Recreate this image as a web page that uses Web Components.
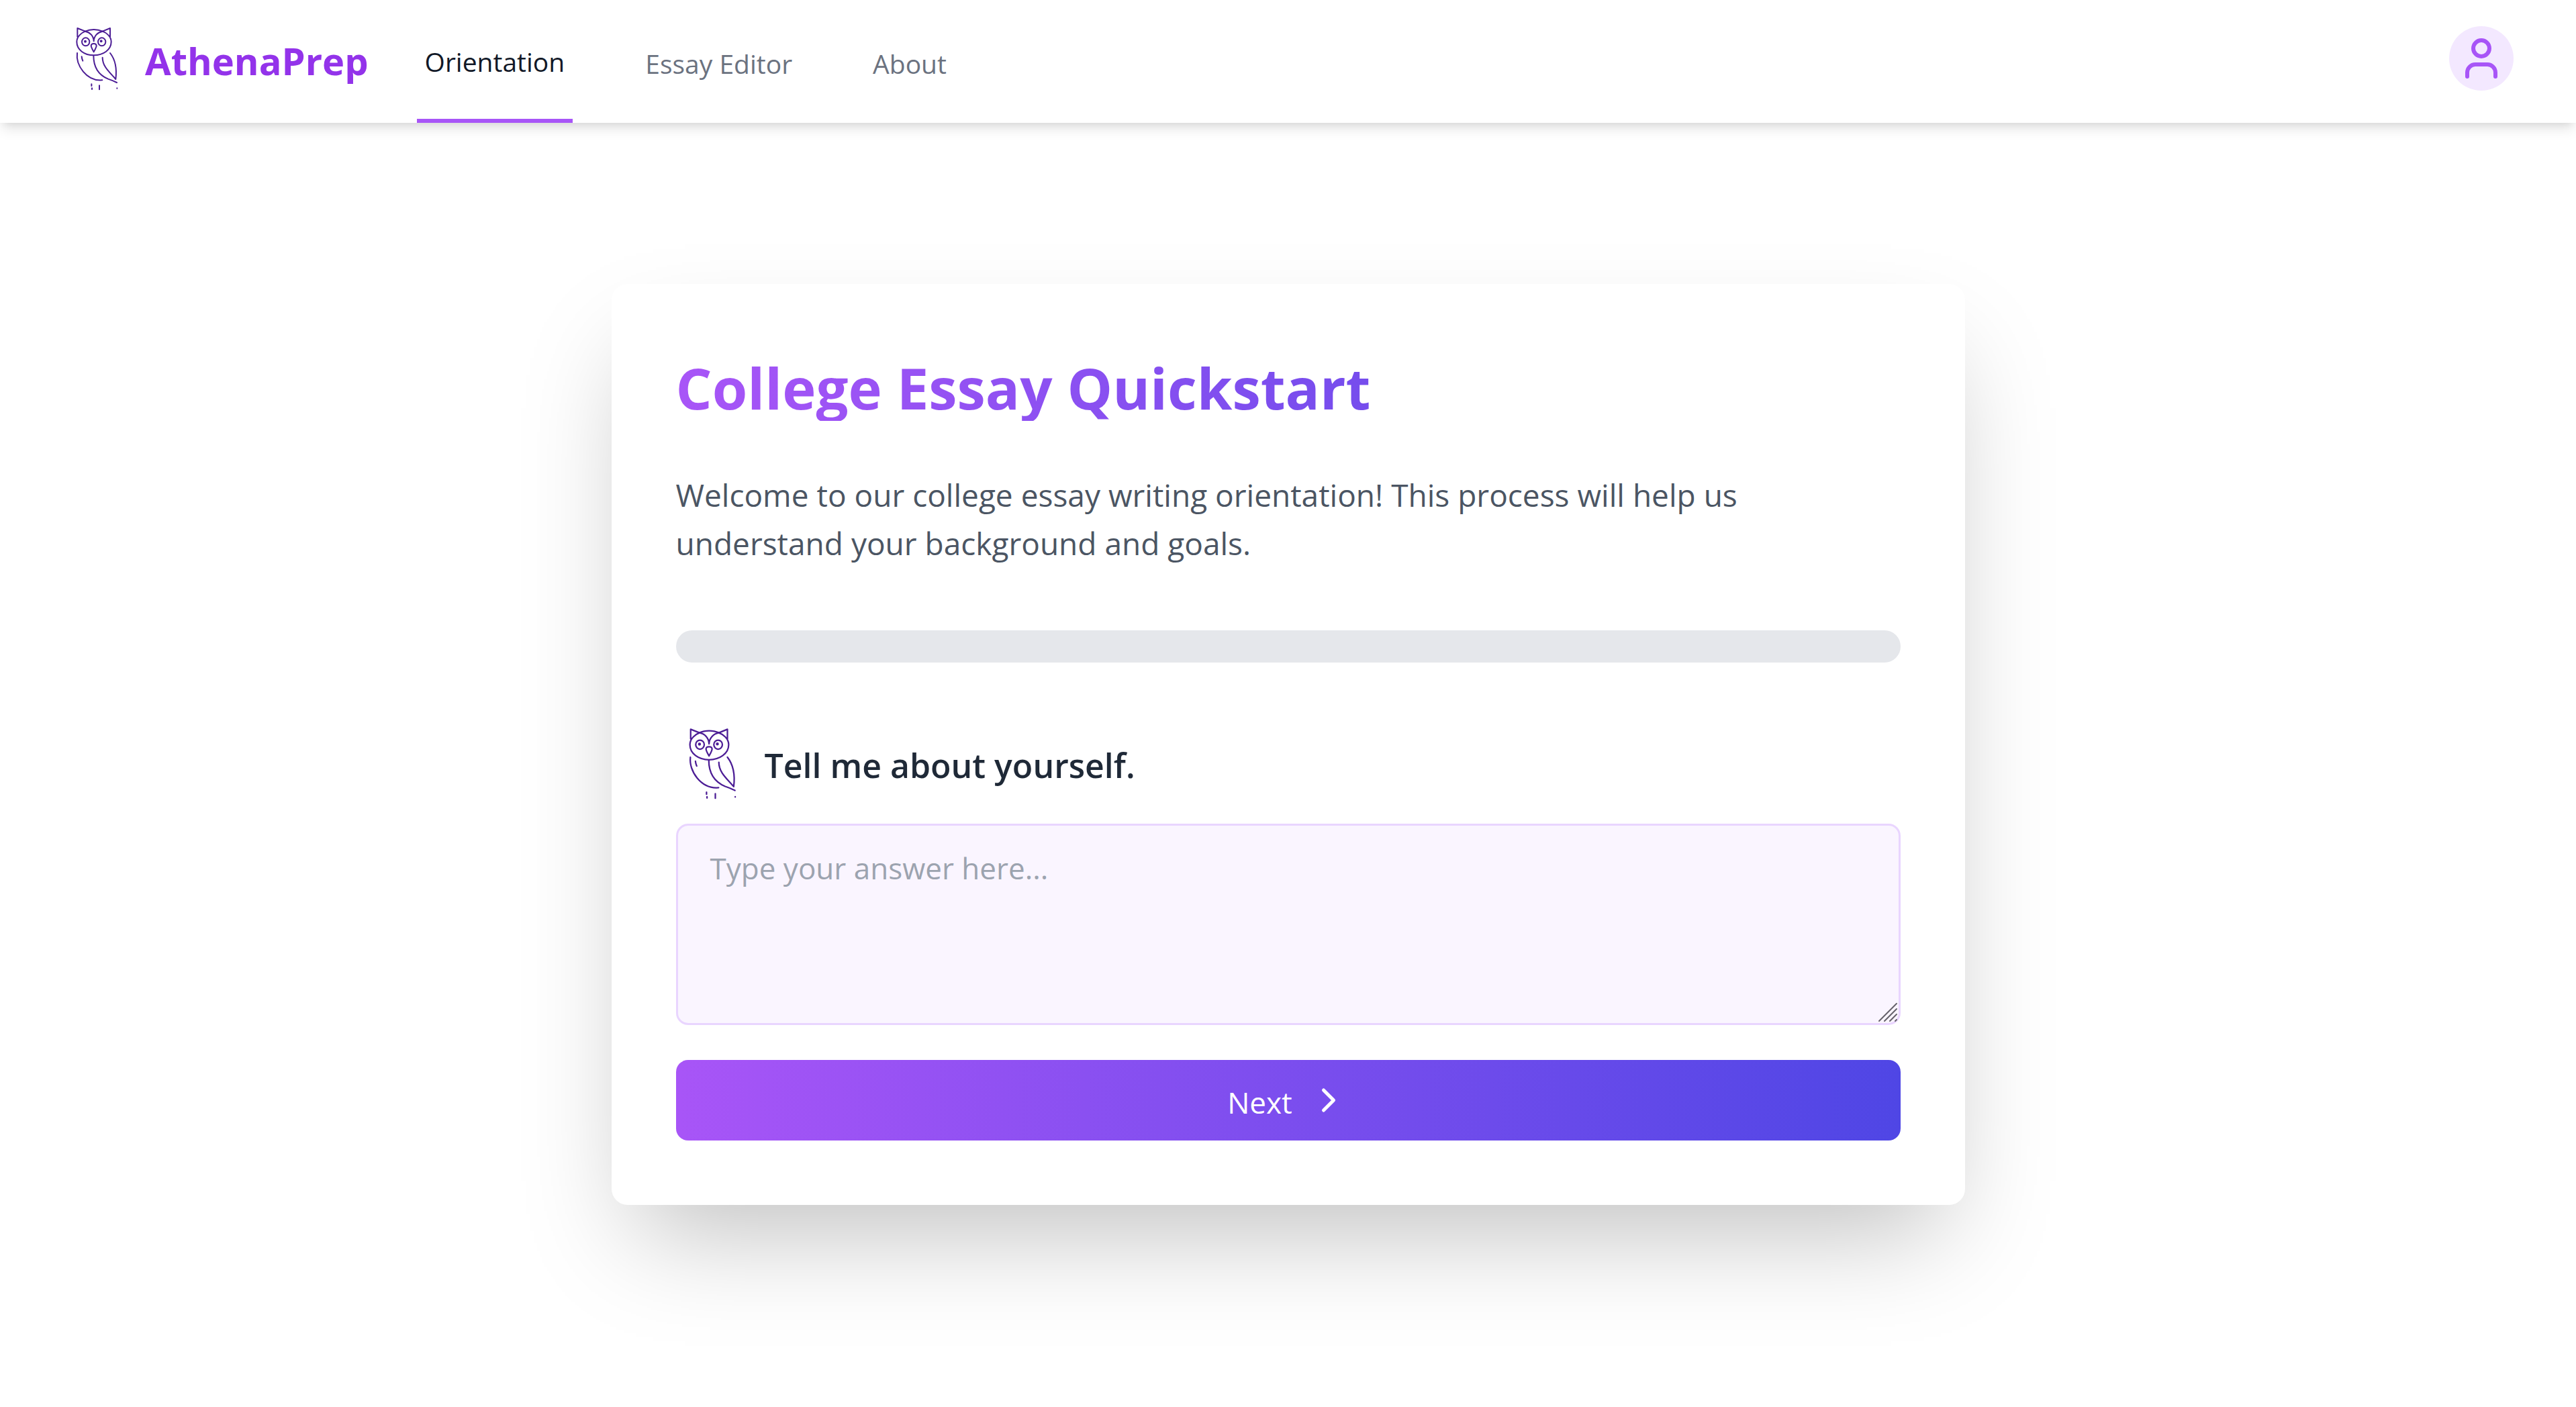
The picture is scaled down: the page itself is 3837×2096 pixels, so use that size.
<!DOCTYPE html>
<html lang="en">
<head>
<meta charset="utf-8">
<title>AthenaPrep</title>
<style>
  body { margin: 0; min-height: 100vh; background: #fff; font-family: "Open Sans", "Noto Sans", sans-serif; font-size: 46px; line-height: 72px; }
</style>
</head>
<body>
<app-header>
  <nav-link href="#orientation" active>Orientation</nav-link>
  <nav-link href="#editor">Essay Editor</nav-link>
  <nav-link href="#about">About</nav-link>
</app-header>
<quickstart-card>
  <span slot="title">College Essay Quickstart</span>
  <span slot="intro">Welcome to our college essay writing orientation! This process will help us understand your background and goals.</span>
  <progress-track value="0"></progress-track>
  <question-form question="Tell me about yourself." placeholder="Type your answer here..."></question-form>
</quickstart-card>

<script>
  class Base extends HTMLElement {
    constructor() {
      super();
      this.attachShadow({ mode: "open" });
    }
    connectedCallback() { this.shadowRoot.innerHTML = this.render(); }
  }

  customElements.define("owl-logo", class extends Base {
    render() {
      return `<style>
        :host { display: block; flex: none; width: 96px; height: 96px; }
        svg { display: block; width: 100%; height: 100%; }
      </style>
      <svg viewBox="48 57 288 288" fill="none" stroke="#4c1d95" stroke-width="6" stroke-linecap="round" stroke-linejoin="round" aria-hidden="true">
        <path d="M106 104V66L141 80C128 85 103 101 103 127C103 162 136 187 179 187S257 162 257 127C257 101 232 85 218 80L252 66V104"/>
        <path d="M141 80C163 69 195 69 218 80"/>
        <path d="M141 80C163 84 178 101 179 124C180 101 196 84 218 80"/>
        <ellipse cx="143" cy="127" rx="17" ry="18"/>
        <ellipse cx="215" cy="127" rx="17" ry="18"/>
        <circle cx="141" cy="125" r="3" fill="#4c1d95"/>
        <circle cx="212" cy="124" r="3" fill="#4c1d95"/>
        <path d="M179 172C173 161 167 151 167 144C168 132 190 132 191 144C191 151 185 161 179 172Z"/>
        <path d="M105 177C98 230 146 304 217 298"/>
        <path d="M125 193Q126 203 130 212"/>
        <path d="M178 189C178 235 198 274 243 293Q264 300 282 309"/>
        <path d="M252 177C274 205 283 246 277 294C250 262 218 238 218 197"/>
        <path d="M169 316V324M171 334V339M204 322V340M283 334V335"/>
      </svg>`;
    }
  });

  customElements.define("nav-link", class extends Base {
    render() {
      return `<style>
        :host { display: flex; }
        a { display: flex; align-items: center; padding: 6px 12px 0; font-size: 39px; line-height: 60px; color: #6b7280; text-decoration: none; }
        :host([active]) a { color: #111827; border-bottom: 6px solid #a855f7; }
      </style>
      <a href="${this.getAttribute("href")}"><slot></slot></a>`;
    }
  });

  customElements.define("app-header", class extends Base {
    render() {
      return `<style>
        :host { display: block; }
        header { display: flex; align-items: stretch; height: 183px; padding: 0 93px 0 96px; box-sizing: border-box;
          box-shadow: 0 12px 18px -3px rgba(0,0,0,.1), 0 6px 12px -6px rgba(0,0,0,.1); }
        .brand { display: flex; align-items: center; gap: 24px; padding-bottom: 9px; margin-right: 72px; font-size: 56px; line-height: 84px; font-weight: 700; color: #9333ea; text-decoration: none; }
        .brand span { padding-top: 6px; }
        nav { display: flex; gap: 96px; flex: 1; }
        .side { display: flex; align-items: center; padding-bottom: 9px; }
        button { display: flex; align-items: center; justify-content: center; width: 96px; height: 96px; padding: 0; border: 0; border-radius: 50%; background: #f3e8ff; color: #a855f7; }
        svg { width: 72px; height: 72px; }
      </style>
      <header>
        <a class="brand" href="#home"><owl-logo></owl-logo><span>AthenaPrep</span></a>
        <nav><slot></slot></nav>
        <div class="side">
          <button type="button" aria-label="Account">
            <svg viewBox="0 0 24 24" fill="none" stroke="currentColor" stroke-width="2" stroke-linecap="round" stroke-linejoin="round"><path d="M19 21v-2a4 4 0 0 0-4-4H9a4 4 0 0 0-4 4v2"/><circle cx="12" cy="7" r="4"/></svg>
          </button>
        </div>
      </header>`;
    }
  });

  customElements.define("progress-track", class extends Base {
    render() {
      return `<style>
        :host { display: block; height: 48px; border-radius: 24px; overflow: hidden; background: #e5e7eb; }
        div { height: 100%; background: #a855f7; }
      </style>
      <div role="progressbar" aria-label="Progress" style="width:${this.getAttribute("value")}%"></div>`;
    }
  });

  customElements.define("question-form", class extends Base {
    render() {
      return `<style>
        :host { display: block; font-size: 44px; }
        form { display: flex; flex-direction: column; margin: 0; }
        .question { display: flex; align-items: center; gap: 24px; margin-bottom: 36px; }
        owl-logo { width: 108px; height: 108px; }
        label { padding-top: 6px; font-size: 50px; line-height: 84px; font-weight: 600; color: #1f2937; }
        .field { display: grid; margin-bottom: 52px; }
        .field > * { grid-area: 1 / 1; }
        textarea { display: block; width: 100%; height: 300px; box-sizing: border-box; margin: 0; padding: 27px 48px; border: 3px solid #e9d5ff; border-radius: 18px; background: #faf5ff; color: #1f2937; font: inherit; resize: none; outline: 0; }
        textarea::placeholder { color: #9ca3af; opacity: 1; }
        .grip { place-self: end; width: 36px; height: 36px; pointer-events: none; }
        button { display: flex; align-items: center; justify-content: center; gap: 24px; height: 120px; padding: 0 48px; border: 0; border-radius: 18px; background: linear-gradient(to right, #a855f7, #4f46e5); color: #fff; font: inherit; }
        button span { padding-top: 6px; }
        .chevron { width: 60px; height: 60px; }
      </style>
      <form>
        <div class="question"><owl-logo></owl-logo><label for="answer">${this.getAttribute("question")}</label></div>
        <div class="field">
          <textarea id="answer" placeholder="${this.getAttribute("placeholder")}"></textarea>
          <svg class="grip" viewBox="0 0 36 36" stroke="#66626b" stroke-width="2" stroke-linecap="round" aria-hidden="true"><path d="M4 30 30 4M12 30 30 12M20 30 30 20M28 30 30 28"/></svg>
        </div>
        <button type="button"><span>Next</span><svg class="chevron" viewBox="0 0 24 24" fill="none" stroke="currentColor" stroke-width="2" stroke-linecap="round" stroke-linejoin="round" aria-hidden="true"><path d="m9 18 6-6-6-6"/></svg></button>
      </form>`;
    }
  });

  customElements.define("quickstart-card", class extends Base {
    render() {
      return `<style>
        :host { display: block; padding: 240px 48px; }
        main { display: flex; flex-direction: column; max-width: 2016px; margin: 0 auto; padding: 96px; box-sizing: border-box; border-radius: 24px; background: #fff; box-shadow: 0 75px 150px -36px rgba(0,0,0,.25); }
        h1 { margin: 0 0 74px; padding-top: 8px; font-size: 85px; line-height: 100px; font-weight: 700; color: transparent; background: linear-gradient(to right, #a855f7, #4f46e5); -webkit-background-clip: text; background-clip: text; }
        p { margin: 0 0 94px; color: #4b5563; }
        .steps { display: flex; flex-direction: column; gap: 96px; }
      </style>
      <main>
        <h1><slot name="title"></slot></h1>
        <p><slot name="intro"></slot></p>
        <div class="steps"><slot></slot></div>
      </main>`;
    }
  });
</script>
</body>
</html>
